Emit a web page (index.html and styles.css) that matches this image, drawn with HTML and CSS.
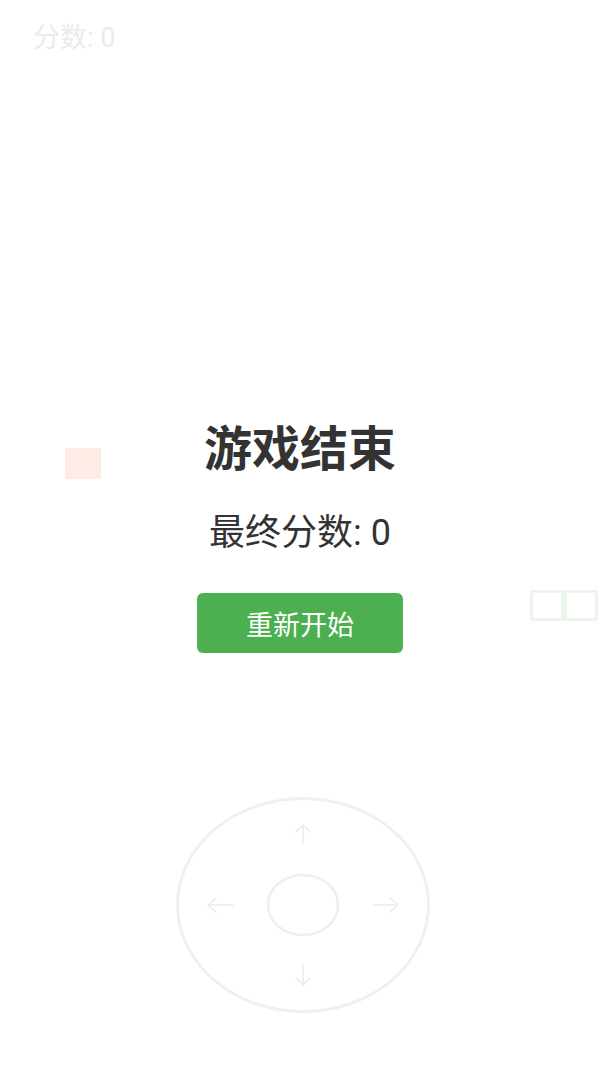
FILE: index.html
```html
<!DOCTYPE html>
<html lang="zh">
<head>
<meta charset="utf-8">
<title>贪吃蛇</title>
<link rel="stylesheet" href="styles.css">
</head>
<body>
<div class="game">
  <div class="hud"><span class="score">分数: 0</span></div>
  <div class="board">
    <div class="cell food" style="left:65px;top:448px"></div>
    <div class="cell snake" style="left:530px;top:590px"></div>
    <div class="cell snake" style="left:564px;top:590px"></div>
  </div>
  <div class="joystick">
    <svg class="pad" width="254" height="216" viewBox="0 0 254 216">
      <ellipse cx="127" cy="108" rx="125.5" ry="106.5" fill="none" stroke="#e9f5e9" stroke-width="3"/>
      <ellipse cx="127" cy="108" rx="35" ry="30" fill="none" stroke="#e8f4e8" stroke-width="2.5"/>
      <g fill="none" stroke="#e6efe6" stroke-width="1.6" stroke-linecap="round" stroke-linejoin="round">
        <path d="M127 28 V46 M120 35 L127 28 L134 35"/>
        <path d="M127 168 V188 M120 181 L127 188 L134 181"/>
        <path d="M32 108 H57 M40 101 L32 108 L40 115"/>
        <path d="M198 108 H222 M214 101 L222 108 L214 115"/>
      </g>
    </svg>
  </div>
  <div class="overlay">
    <h2 class="title">游戏结束</h2>
    <p class="final">最终分数: 0</p>
    <button class="restart">重新开始</button>
  </div>
</div>
</body>
</html>
```
FILE: styles.css
```css
html, body {
  margin: 0;
  padding: 0;
  background: #ffffff;
}
body {
  font-family: Roboto, "Noto Sans CJK SC", sans-serif;
}
.game {
  position: relative;
  width: 600px;
  height: 1066px;
  overflow: hidden;
  background: #ffffff;
}
.hud {
  padding: 19px 0 0 33px;
}
.score {
  font-size: 27px;
  line-height: 38px;
  color: #ebebeb;
}
.board {
  position: absolute;
  inset: 0;
}
.cell {
  position: absolute;
  box-sizing: border-box;
  width: 34px;
  height: 31px;
}
.food {
  width: 36px;
  height: 31px;
  background: #ffebe5;
}
.snake {
  width: 34px;
  border: 3px solid #edf6ed;
  background: #ffffff;
}
.joystick {
  position: absolute;
  left: 176px;
  top: 797px;
  width: 254px;
  height: 216px;
}
.pad {
  display: block;
}
.overlay {
  position: absolute;
  inset: 0;
  display: flex;
  flex-direction: column;
  align-items: center;
  justify-content: center;
  padding-top: 9px;
  box-sizing: border-box;
}
.title {
  margin: 0;
  font-size: 48px;
  line-height: 56px;
  font-weight: 700;
  color: #333333;
}
.final {
  margin: 34px 0 0;
  font-size: 36px;
  line-height: 42px;
  color: #333333;
}
.restart {
  margin-top: 39px;
  width: 206px;
  height: 60px;
  border: none;
  border-radius: 6px;
  background: #4caf50;
  color: #ffffff;
  font-family: Roboto, "Noto Sans CJK SC", sans-serif;
  font-size: 27px;
  padding: 0;
}
```
